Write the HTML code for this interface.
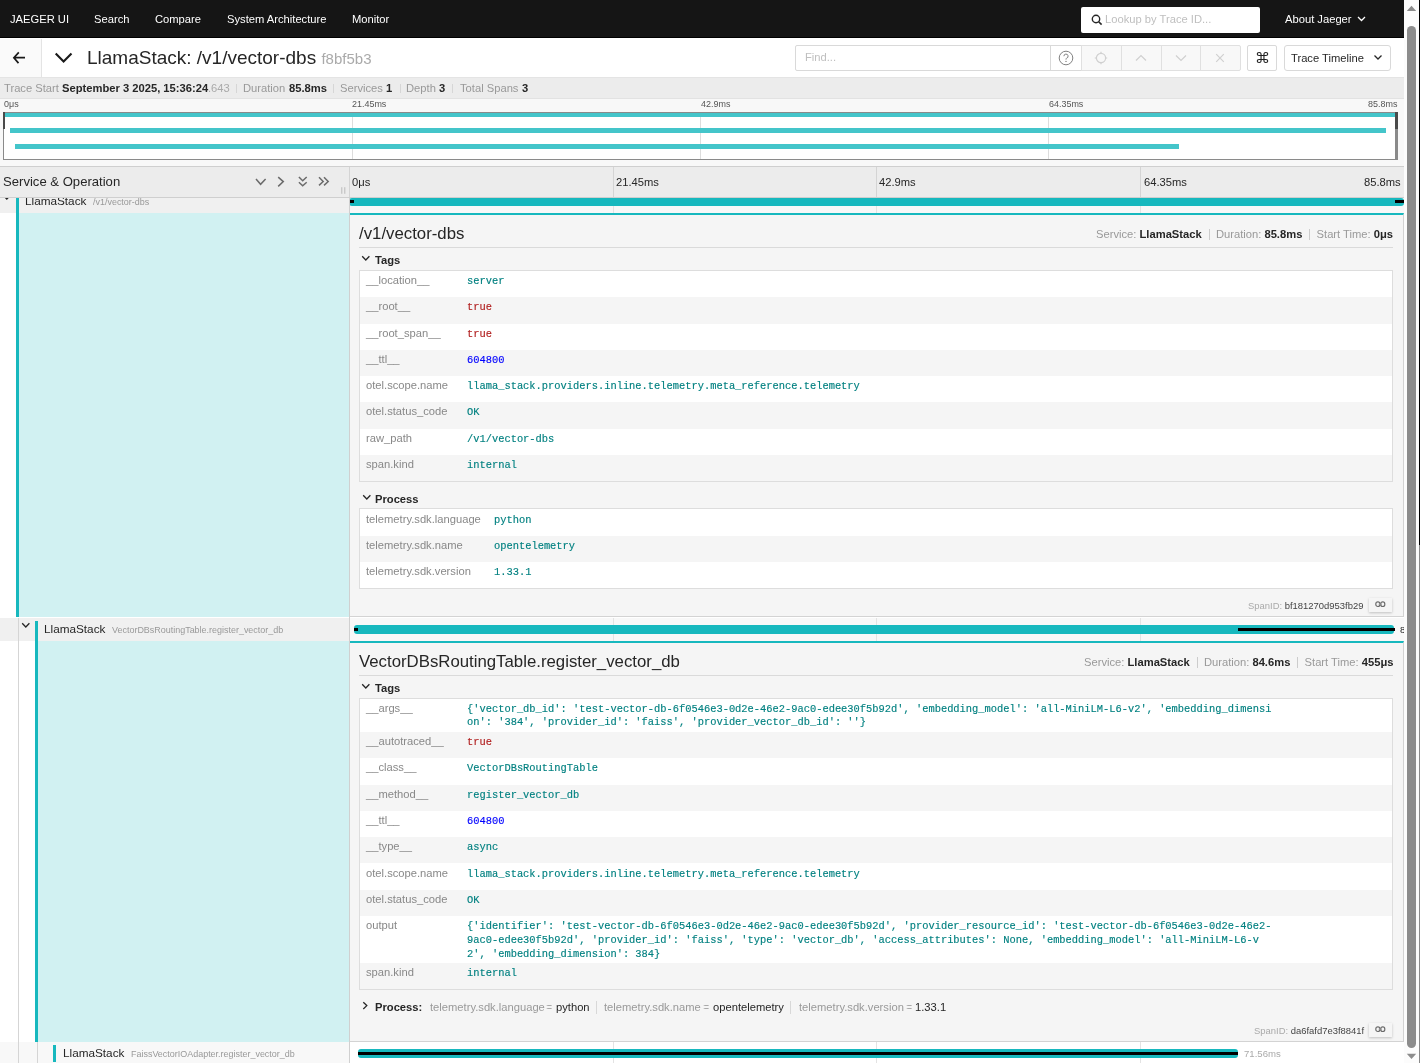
<!DOCTYPE html>
<html><head><meta charset="utf-8"><style>
*{box-sizing:border-box;margin:0;padding:0}
html,body{width:1420px;height:1063px;overflow:hidden;background:#fff;font-family:"Liberation Sans",sans-serif;color:#262626}
.a{position:absolute}
.t{position:absolute;white-space:pre;line-height:0;will-change:transform}
</style></head><body>
<div class="a" style="left:0px;top:0px;width:1404px;height:38px;background:#151515;border-bottom:1px solid #000"></div>
<div class="t" style="left:9.5px;top:19px;font-size:11.2px;color:#fff;">JAEGER UI</div>
<div class="t" style="left:94px;top:19px;font-size:11.2px;color:#fff;">Search</div>
<div class="t" style="left:155px;top:19px;font-size:11.2px;color:#fff;">Compare</div>
<div class="t" style="left:227px;top:19px;font-size:11.2px;color:#fff;">System Architecture</div>
<div class="t" style="left:352px;top:19px;font-size:11.2px;color:#fff;">Monitor</div>
<div class="a" style="left:1081px;top:7px;width:179px;height:26px;background:#fff;border-radius:2px"></div>
<svg class="a" style="left:1091px;top:14px" width="12" height="12" viewBox="0 0 12 12"><circle cx="5" cy="5" r="3.7" fill="none" stroke="#262626" stroke-width="1.4"/><path d="M7.7 7.7L10.6 10.6" stroke="#262626" stroke-width="1.6"/></svg>
<div class="t" style="left:1105px;top:19px;font-size:11.2px;color:#bfbfbf;">Lookup by Trace ID...</div>
<div class="t" style="left:1285px;top:19px;font-size:11.2px;color:#fff;">About Jaeger</div>
<svg class="a" style="left:1357px;top:16px" width="9" height="6" viewBox="0 0 9 6"><path d="M1 1L4.5 4.5L8 1" fill="none" stroke="#fff" stroke-width="1.3"/></svg>
<div class="a" style="left:0px;top:38px;width:1404px;height:40px;background:#fff;border-bottom:1px solid #e4e4e4"></div>
<div class="a" style="left:0px;top:39px;width:42px;height:38px;background:#fafafa;border-right:1px solid #e4e4e4"></div>
<svg class="a" style="left:10px;top:50px" width="18" height="16" viewBox="0 0 18 16"><path d="M3.8 7.7H15M8.8 2.4L3.9 7.7L8.5 13.1" fill="none" stroke="#1a1a1a" stroke-width="1.7"/></svg>
<svg class="a" style="left:53px;top:50px" width="21" height="14" viewBox="0 0 21 14"><path d="M2.7 3.5L10.6 11.5L18.5 3.5" fill="none" stroke="#1a1a1a" stroke-width="2.1"/></svg>
<div class="t" style="left:86.5px;top:58px;font-size:19px;color:#262626;">LlamaStack: /v1/vector-dbs <span style="font-size:15px;color:#aaa">f8bf5b3</span></div>
<div class="a" style="left:795px;top:45px;width:256px;height:26px;background:#fff;border:1px solid #d9d9d9;border-radius:2px 0 0 2px"></div>
<div class="t" style="left:804.5px;top:57px;font-size:11.2px;color:#bfbfbf;">Find...</div>
<div class="a" style="left:1050px;top:45px;width:32px;height:26px;background:#fff;border:1px solid #d9d9d9"></div>
<svg class="a" style="left:1058px;top:50px" width="16" height="16" viewBox="0 0 16 16"><circle cx="8" cy="8" r="6.8" fill="none" stroke="#7a7a7a" stroke-width="0.95"/><path d="M5.9 6.2A2.1 2.1 0 1 1 8.6 8.2C8.1 8.4 8 8.8 8 9.6" fill="none" stroke="#7a7a7a" stroke-width="0.95"/><circle cx="8" cy="11.4" r="0.7" fill="#7a7a7a"/></svg>
<div class="a" style="left:1081px;top:45px;width:160px;height:26px;background:#f8f8f8;border:1px solid #e0e0e0;border-radius:0 2px 2px 0"></div>
<div class="a" style="left:1121px;top:45px;width:1px;height:26px;background:#e0e0e0"></div>
<div class="a" style="left:1161px;top:45px;width:1px;height:26px;background:#e0e0e0"></div>
<div class="a" style="left:1200px;top:45px;width:1px;height:26px;background:#e0e0e0"></div>
<svg class="a" style="left:1093px;top:50px" width="16" height="16" viewBox="0 0 16 16"><circle cx="8" cy="8" r="4.6" fill="none" stroke="#d0d0d0" stroke-width="1.2"/><path d="M8 1.8V4M8 12V14.2M1.8 8H4M12 8H14.2" stroke="#d0d0d0" stroke-width="1.2"/></svg>
<svg class="a" style="left:1135px;top:54px" width="12" height="8" viewBox="0 0 12 8"><path d="M1 6.5L6 1.5L11 6.5" fill="none" stroke="#d0d0d0" stroke-width="1.2"/></svg>
<svg class="a" style="left:1175px;top:54px" width="12" height="8" viewBox="0 0 12 8"><path d="M1 1.5L6 6.5L11 1.5" fill="none" stroke="#d0d0d0" stroke-width="1.2"/></svg>
<svg class="a" style="left:1215px;top:53px" width="10" height="10" viewBox="0 0 10 10"><path d="M1.2 1.2L8.8 8.8M8.8 1.2L1.2 8.8" fill="none" stroke="#d0d0d0" stroke-width="1.2"/></svg>
<div class="a" style="left:1247px;top:45px;width:30px;height:26px;background:#fff;border:1px solid #d9d9d9;border-radius:2px"></div>
<svg class="a" style="left:1255.5px;top:50.9px" width="13" height="13" viewBox="0 0 13 13"><path d="M5.05 4.55H7.95V8.45H5.05ZM5.05 4.55L5.05 3.00A1.9 1.55 0 1 0 3.15 4.55ZM5.05 8.45L5.05 10.00A1.9 1.55 0 1 1 3.15 8.45ZM7.95 4.55L7.95 3.00A1.9 1.55 0 1 1 9.85 4.55ZM7.95 8.45L7.95 10.00A1.9 1.55 0 1 0 9.85 8.45Z" fill="none" stroke="#1f1f1f" stroke-width="1.1"/></svg>
<div class="a" style="left:1284px;top:45px;width:107px;height:26px;background:#fff;border:1px solid #d9d9d9;border-radius:3px"></div>
<div class="t" style="left:1291px;top:58px;font-size:11.2px;color:#262626;">Trace Timeline</div>
<svg class="a" style="left:1373px;top:54px" width="10" height="7" viewBox="0 0 10 7"><path d="M1.5 1.5L5 5L8.5 1.5" fill="none" stroke="#262626" stroke-width="1.3"/></svg>
<div class="a" style="left:0px;top:78px;width:1404px;height:21px;background:#ececec;border-bottom:1px solid #e2e2e2"></div>
<div class="t" style="left:4px;top:88px;font-size:11.2px;color:#999;">Trace Start</div>
<div class="t" style="left:61.5px;top:88px;font-size:11.2px;color:#262626;font-weight:bold">September 3 2025, 15:36:24</div>
<div class="t" style="left:207.5px;top:88px;font-size:11.2px;color:#aaa;">.643</div>
<div class="a" style="left:236px;top:84px;width:1px;height:9px;background:#d6d6d6"></div>
<div class="a" style="left:333px;top:84px;width:1px;height:9px;background:#d6d6d6"></div>
<div class="a" style="left:400px;top:84px;width:1px;height:9px;background:#d6d6d6"></div>
<div class="a" style="left:452px;top:84px;width:1px;height:9px;background:#d6d6d6"></div>
<div class="t" style="left:243px;top:88px;font-size:11.2px;color:#999;">Duration</div>
<div class="t" style="left:288.5px;top:88px;font-size:11.2px;color:#262626;font-weight:bold">85.8ms</div>
<div class="t" style="left:340px;top:88px;font-size:11.2px;color:#999;">Services</div>
<div class="t" style="left:386px;top:88px;font-size:11.2px;color:#262626;font-weight:bold">1</div>
<div class="t" style="left:406px;top:88px;font-size:11.2px;color:#999;">Depth</div>
<div class="t" style="left:438.5px;top:88px;font-size:11.2px;color:#262626;font-weight:bold">3</div>
<div class="t" style="left:459.8px;top:88px;font-size:11.2px;color:#999;">Total Spans</div>
<div class="t" style="left:521.8px;top:88px;font-size:11.2px;color:#262626;font-weight:bold">3</div>
<div class="a" style="left:0px;top:99px;width:1404px;height:68px;background:#f8f8f8;border-bottom:1px solid #dcdcdc"></div>
<div class="t" style="left:3.5px;top:104px;font-size:8.96px;color:#555;">0μs</div>
<div class="t" style="left:352px;top:104px;font-size:8.96px;color:#555;">21.45ms</div>
<div class="t" style="left:700.5px;top:104px;font-size:8.96px;color:#555;">42.9ms</div>
<div class="t" style="left:1048.5px;top:104px;font-size:8.96px;color:#555;">64.35ms</div>
<div class="t" style="right:22.5px;top:104px;font-size:8.96px;color:#555;">85.8ms</div>
<div class="a" style="left:3px;top:112px;width:1395px;height:48px;background:#fff;border:1px solid #8a8a8a"></div>
<div class="a" style="left:352px;top:113px;width:1px;height:46px;background:#ddd"></div>
<div class="a" style="left:700px;top:113px;width:1px;height:46px;background:#ddd"></div>
<div class="a" style="left:1048px;top:113px;width:1px;height:46px;background:#ddd"></div>
<div class="a" style="left:4px;top:113px;width:1391px;height:4px;background:#44c5ca"></div>
<div class="a" style="left:10px;top:128px;width:1376px;height:5px;background:#44c5ca"></div>
<div class="a" style="left:15px;top:144px;width:1164px;height:5px;background:#44c5ca"></div>
<div class="a" style="left:1395.3px;top:112px;width:2.6px;height:48px;background:#8a8a8a"></div>
<div class="a" style="left:3px;top:112px;width:1.9px;height:17px;background:#4a4a4a"></div>
<div class="a" style="left:1395.3px;top:112px;width:2.6px;height:17px;background:#4a4a4a"></div>
<div class="a" style="left:0px;top:190.6px;width:349px;height:22.4px;background:#f0f0f0"></div>
<div class="a" style="left:349px;top:190.6px;width:1055px;height:22.4px;background:#f8f8f8"></div>
<div class="a" style="left:613px;top:190.6px;width:1px;height:22.4px;background:#e3e3e3"></div>
<div class="a" style="left:876px;top:190.6px;width:1px;height:22.4px;background:#e3e3e3"></div>
<div class="a" style="left:1140px;top:190.6px;width:1px;height:22.4px;background:#e3e3e3"></div>
<svg class="a" style="left:2.2px;top:193.8px" width="10" height="8" viewBox="0 0 10 8"><path d="M1.2 1.3L4.8 5L8.4 1.3" fill="none" stroke="#262626" stroke-width="1.3"/></svg>
<div class="a" style="left:0px;top:212.8px;width:349px;height:1px;background:#cfe3e4"></div>
<div class="a" style="left:16px;top:193.6px;width:3px;height:20px;background:#17b8be"></div>
<div class="t" style="left:25.3px;top:200.7px;font-size:11.76px;color:#262626;">LlamaStack</div>
<div class="t" style="left:93px;top:201.7px;font-size:8.96px;color:#999;">/v1/vector-dbs</div>
<div class="a" style="left:349px;top:197.7px;width:1055px;height:8.3px;background:#17b8be;border-radius:3px"></div>
<div class="a" style="left:349.3px;top:200.2px;width:5px;height:3px;background:#000"></div>
<div class="a" style="left:1395px;top:200.2px;width:8.5px;height:3px;background:#000"></div>
<div class="a" style="left:0px;top:213px;width:16px;height:404px;background:#fff"></div>
<div class="a" style="left:16px;top:213px;width:3px;height:404px;background:#17b8be"></div>
<div class="a" style="left:19px;top:213px;width:330px;height:404px;background:#d1f1f2"></div>
<div class="a" style="left:349px;top:213px;width:1055px;height:404px;background:#f5f5f5;border-left:1px solid #d3d3d3;border-right:1px solid #d3d3d3;border-bottom:1px solid #d3d3d3;border-top:2px solid #17b8be"></div>
<div class="t" style="left:359.2px;top:233.9px;font-size:16.8px;color:#262626;">/v1/vector-dbs</div>
<div class="t" style="right:26.6px;top:234px;font-size:11.2px;color:#262626;"><span style="color:#999">Service:</span> <b style="color:#262626">LlamaStack</b><span style="display:inline-block;width:14.2px;height:0;position:relative"><i style="position:absolute;left:6.8px;top:-9px;width:1px;height:11px;background:#ccc"></i></span><span style="color:#999">Duration:</span> <b style="color:#262626">85.8ms</b><span style="display:inline-block;width:14.2px;height:0;position:relative"><i style="position:absolute;left:6.8px;top:-9px;width:1px;height:11px;background:#ccc"></i></span><span style="color:#999">Start Time:</span> <b style="color:#262626">0μs</b></div>
<div class="a" style="left:359px;top:247px;width:1034px;height:1px;background:#dadada"></div>
<svg class="a" style="left:361px;top:255px" width="10" height="8" viewBox="0 0 10 8"><path d="M1.2 1.3L4.8 5L8.4 1.3" fill="none" stroke="#262626" stroke-width="1.3"/></svg>
<div class="t" style="left:375px;top:260px;font-size:11.2px;color:#262626;font-weight:bold">Tags</div>
<div class="a" style="left:359px;top:270px;width:1034px;height:212px;background:#fff;border:1px solid #ddd"></div>
<div class="t" style="left:366.2px;top:280.1px;font-size:11.2px;color:#888;">__location__</div>
<div class="t" style="left:466.5px;top:281.1px;font-size:10.4px;color:#008080;font-family:'Liberation Mono',monospace;-webkit-text-stroke:0.15px currentColor;">server</div>
<div class="a" style="left:360px;top:297.25px;width:1032px;height:26.25px;background:#f5f5f5"></div>
<div class="t" style="left:366.2px;top:306.35px;font-size:11.2px;color:#888;">__root__</div>
<div class="t" style="left:466.5px;top:307.35px;font-size:10.4px;color:#b22222;font-family:'Liberation Mono',monospace;-webkit-text-stroke:0.15px currentColor;">true</div>
<div class="t" style="left:366.2px;top:332.6px;font-size:11.2px;color:#888;">__root_span__</div>
<div class="t" style="left:466.5px;top:333.6px;font-size:10.4px;color:#b22222;font-family:'Liberation Mono',monospace;-webkit-text-stroke:0.15px currentColor;">true</div>
<div class="a" style="left:360px;top:349.75px;width:1032px;height:26.25px;background:#f5f5f5"></div>
<div class="t" style="left:366.2px;top:358.85px;font-size:11.2px;color:#888;">__ttl__</div>
<div class="t" style="left:466.5px;top:359.85px;font-size:10.4px;color:#0000ff;font-family:'Liberation Mono',monospace;-webkit-text-stroke:0.15px currentColor;">604800</div>
<div class="t" style="left:366.2px;top:385.1px;font-size:11.2px;color:#888;">otel.scope.name</div>
<div class="t" style="left:466.5px;top:386.1px;font-size:10.4px;color:#008080;font-family:'Liberation Mono',monospace;-webkit-text-stroke:0.15px currentColor;">llama_stack.providers.inline.telemetry.meta_reference.telemetry</div>
<div class="a" style="left:360px;top:402.25px;width:1032px;height:26.25px;background:#f5f5f5"></div>
<div class="t" style="left:366.2px;top:411.35px;font-size:11.2px;color:#888;">otel.status_code</div>
<div class="t" style="left:466.5px;top:412.35px;font-size:10.4px;color:#008080;font-family:'Liberation Mono',monospace;-webkit-text-stroke:0.15px currentColor;">OK</div>
<div class="t" style="left:366.2px;top:437.6px;font-size:11.2px;color:#888;">raw_path</div>
<div class="t" style="left:466.5px;top:438.6px;font-size:10.4px;color:#008080;font-family:'Liberation Mono',monospace;-webkit-text-stroke:0.15px currentColor;">/v1/vector-dbs</div>
<div class="a" style="left:360px;top:454.75px;width:1032px;height:26.25px;background:#f5f5f5"></div>
<div class="t" style="left:366.2px;top:463.85px;font-size:11.2px;color:#888;">span.kind</div>
<div class="t" style="left:466.5px;top:464.85px;font-size:10.4px;color:#008080;font-family:'Liberation Mono',monospace;-webkit-text-stroke:0.15px currentColor;">internal</div>
<svg class="a" style="left:362px;top:493.5px" width="10" height="8" viewBox="0 0 10 8"><path d="M1.2 1.3L4.8 5L8.4 1.3" fill="none" stroke="#262626" stroke-width="1.3"/></svg>
<div class="t" style="left:375px;top:498.5px;font-size:11.2px;color:#262626;font-weight:bold">Process</div>
<div class="a" style="left:359px;top:508.4px;width:1034px;height:80.7px;background:#fff;border:1px solid #ddd"></div>
<div class="t" style="left:366.2px;top:518.5px;font-size:11.2px;color:#888;">telemetry.sdk.language</div>
<div class="t" style="left:493.5px;top:519.5px;font-size:10.4px;color:#008080;font-family:'Liberation Mono',monospace;-webkit-text-stroke:0.15px currentColor;">python</div>
<div class="a" style="left:360px;top:536.3px;width:1032px;height:25.8px;background:#f5f5f5"></div>
<div class="t" style="left:366.2px;top:545.4px;font-size:11.2px;color:#888;">telemetry.sdk.name</div>
<div class="t" style="left:493.5px;top:546.4px;font-size:10.4px;color:#008080;font-family:'Liberation Mono',monospace;-webkit-text-stroke:0.15px currentColor;">opentelemetry</div>
<div class="t" style="left:366.2px;top:571.2px;font-size:11.2px;color:#888;">telemetry.sdk.version</div>
<div class="t" style="left:493.5px;top:572.2px;font-size:10.4px;color:#008080;font-family:'Liberation Mono',monospace;-webkit-text-stroke:0.15px currentColor;">1.33.1</div>
<div class="t" style="right:56.5px;top:605.8px;font-size:9.45px;color:#262626;"><span style="color:#aaa">SpanID:</span> <span style="color:#444">bf181270d953fb29</span></div>
<div class="a" style="left:1368.7px;top:597.9px;width:23.5px;height:14px;background:#f5f5f5;box-shadow:0 1px 2.5px rgba(0,0,0,0.22)"></div>
<svg class="a" style="left:1375px;top:601.2px" width="11" height="7" viewBox="0 0 11 7"><rect x="0.8" y="0.9" width="4.1" height="4.6" rx="2" fill="none" stroke="#6a6a6a" stroke-width="1.15"/><rect x="5.7" y="0.9" width="4.1" height="4.6" rx="2" fill="none" stroke="#6a6a6a" stroke-width="1.15"/><path d="M3.6 3.2H7" stroke="#9a9a9a" stroke-width="0.9"/></svg>
<div class="a" style="left:0px;top:618px;width:349px;height:22.6px;background:#f0f0f0"></div>
<div class="a" style="left:349px;top:618px;width:1055px;height:22.6px;background:#f8f8f8"></div>
<div class="a" style="left:613px;top:618px;width:1px;height:23px;background:#e3e3e3"></div>
<div class="a" style="left:876px;top:618px;width:1px;height:23px;background:#e3e3e3"></div>
<div class="a" style="left:1140px;top:618px;width:1px;height:23px;background:#e3e3e3"></div>
<div class="a" style="left:18px;top:618px;width:1px;height:23px;background:#d5d5d5"></div>
<div class="a" style="left:0px;top:640.6px;width:349px;height:1px;background:#cfe3e4"></div>
<svg class="a" style="left:20.9px;top:622px" width="10" height="8" viewBox="0 0 10 8"><path d="M1.2 1.3L4.8 5L8.4 1.3" fill="none" stroke="#262626" stroke-width="1.3"/></svg>
<div class="a" style="left:35px;top:621px;width:3px;height:20px;background:#17b8be"></div>
<div class="t" style="left:44.3px;top:628.8px;font-size:11.76px;color:#262626;">LlamaStack</div>
<div class="t" style="left:112px;top:629.8px;font-size:8.96px;color:#999;">VectorDBsRoutingTable.register_vector_db</div>
<div class="a" style="left:354px;top:625.2px;width:1040.4px;height:8.5px;background:#17b8be;border-radius:3px"></div>
<div class="a" style="left:354px;top:628.1px;width:4px;height:2.8px;background:#000"></div>
<div class="a" style="left:1238px;top:628.1px;width:157px;height:2.8px;background:#000"></div>
<div class="a" style="left:1397px;top:618px;width:6.5px;height:22px;overflow:hidden"><div class="t" style="left:2.5px;top:12px;font-size:9.6px;color:#262626">84.6ms</div></div>
<div class="a" style="left:0px;top:641px;width:18px;height:401px;background:#fff"></div>
<div class="a" style="left:18px;top:641px;width:1px;height:401px;background:#d5d5d5"></div>
<div class="a" style="left:19px;top:641px;width:16px;height:401px;background:#fff"></div>
<div class="a" style="left:35px;top:641px;width:3px;height:401px;background:#17b8be"></div>
<div class="a" style="left:38px;top:641px;width:311px;height:401px;background:#d1f1f2"></div>
<div class="a" style="left:349px;top:641px;width:1055px;height:400.5px;background:#f5f5f5;border-left:1px solid #d3d3d3;border-right:1px solid #d3d3d3;border-bottom:1px solid #d3d3d3;border-top:2px solid #17b8be"></div>
<div class="t" style="left:359.2px;top:661.5px;font-size:16.8px;color:#262626;">VectorDBsRoutingTable.register_vector_db</div>
<div class="t" style="right:26.6px;top:662px;font-size:11.2px;color:#262626;"><span style="color:#999">Service:</span> <b style="color:#262626">LlamaStack</b><span style="display:inline-block;width:14.2px;height:0;position:relative"><i style="position:absolute;left:6.8px;top:-9px;width:1px;height:11px;background:#ccc"></i></span><span style="color:#999">Duration:</span> <b style="color:#262626">84.6ms</b><span style="display:inline-block;width:14.2px;height:0;position:relative"><i style="position:absolute;left:6.8px;top:-9px;width:1px;height:11px;background:#ccc"></i></span><span style="color:#999">Start Time:</span> <b style="color:#262626">455μs</b></div>
<div class="a" style="left:359px;top:675px;width:1034px;height:1px;background:#dadada"></div>
<svg class="a" style="left:361px;top:683px" width="10" height="8" viewBox="0 0 10 8"><path d="M1.2 1.3L4.8 5L8.4 1.3" fill="none" stroke="#262626" stroke-width="1.3"/></svg>
<div class="t" style="left:375px;top:688px;font-size:11.2px;color:#262626;font-weight:bold">Tags</div>
<div class="a" style="left:359px;top:698px;width:1034px;height:292.4px;background:#fff;border:1px solid #ddd"></div>
<div class="t" style="left:366.2px;top:708.1px;font-size:11.2px;color:#888;">__args__</div>
<div class="t" style="left:466.5px;top:708.6px;font-size:10.4px;color:#008080;font-family:'Liberation Mono',monospace;-webkit-text-stroke:0.15px currentColor;">{'vector_db_id': 'test-vector-db-6f0546e3-0d2e-46e2-9ac0-edee30f5b92d', 'embedding_model': 'all-MiniLM-L6-v2', 'embedding_dimensi</div>
<div class="t" style="left:466.5px;top:721.7px;font-size:10.4px;color:#008080;font-family:'Liberation Mono',monospace;-webkit-text-stroke:0.15px currentColor;">on': '384', 'provider_id': 'faiss', 'provider_vector_db_id': ''}</div>
<div class="a" style="left:360px;top:732px;width:1032px;height:26.3px;background:#f5f5f5"></div>
<div class="t" style="left:366.2px;top:741.1px;font-size:11.2px;color:#888;">__autotraced__</div>
<div class="t" style="left:466.5px;top:742.1px;font-size:10.4px;color:#b22222;font-family:'Liberation Mono',monospace;-webkit-text-stroke:0.15px currentColor;">true</div>
<div class="t" style="left:366.2px;top:767.4px;font-size:11.2px;color:#888;">__class__</div>
<div class="t" style="left:466.5px;top:768.4px;font-size:10.4px;color:#008080;font-family:'Liberation Mono',monospace;-webkit-text-stroke:0.15px currentColor;">VectorDBsRoutingTable</div>
<div class="a" style="left:360px;top:784.6px;width:1032px;height:26.3px;background:#f5f5f5"></div>
<div class="t" style="left:366.2px;top:793.7px;font-size:11.2px;color:#888;">__method__</div>
<div class="t" style="left:466.5px;top:794.7px;font-size:10.4px;color:#008080;font-family:'Liberation Mono',monospace;-webkit-text-stroke:0.15px currentColor;">register_vector_db</div>
<div class="t" style="left:366.2px;top:820px;font-size:11.2px;color:#888;">__ttl__</div>
<div class="t" style="left:466.5px;top:821px;font-size:10.4px;color:#0000ff;font-family:'Liberation Mono',monospace;-webkit-text-stroke:0.15px currentColor;">604800</div>
<div class="a" style="left:360px;top:837.2px;width:1032px;height:26.3px;background:#f5f5f5"></div>
<div class="t" style="left:366.2px;top:846.3px;font-size:11.2px;color:#888;">__type__</div>
<div class="t" style="left:466.5px;top:847.3px;font-size:10.4px;color:#008080;font-family:'Liberation Mono',monospace;-webkit-text-stroke:0.15px currentColor;">async</div>
<div class="t" style="left:366.2px;top:872.6px;font-size:11.2px;color:#888;">otel.scope.name</div>
<div class="t" style="left:466.5px;top:873.6px;font-size:10.4px;color:#008080;font-family:'Liberation Mono',monospace;-webkit-text-stroke:0.15px currentColor;">llama_stack.providers.inline.telemetry.meta_reference.telemetry</div>
<div class="a" style="left:360px;top:889.8px;width:1032px;height:26.3px;background:#f5f5f5"></div>
<div class="t" style="left:366.2px;top:898.9px;font-size:11.2px;color:#888;">otel.status_code</div>
<div class="t" style="left:466.5px;top:899.9px;font-size:10.4px;color:#008080;font-family:'Liberation Mono',monospace;-webkit-text-stroke:0.15px currentColor;">OK</div>
<div class="t" style="left:366.2px;top:925.2px;font-size:11.2px;color:#888;">output</div>
<div class="t" style="left:466.5px;top:925.8px;font-size:10.4px;color:#008080;font-family:'Liberation Mono',monospace;-webkit-text-stroke:0.15px currentColor;">{'identifier': 'test-vector-db-6f0546e3-0d2e-46e2-9ac0-edee30f5b92d', 'provider_resource_id': 'test-vector-db-6f0546e3-0d2e-46e2-</div>
<div class="t" style="left:466.5px;top:939.6px;font-size:10.4px;color:#008080;font-family:'Liberation Mono',monospace;-webkit-text-stroke:0.15px currentColor;">9ac0-edee30f5b92d', 'provider_id': 'faiss', 'type': 'vector_db', 'access_attributes': None, 'embedding_model': 'all-MiniLM-L6-v</div>
<div class="t" style="left:466.5px;top:953.6px;font-size:10.4px;color:#008080;font-family:'Liberation Mono',monospace;-webkit-text-stroke:0.15px currentColor;">2', 'embedding_dimension': 384}</div>
<div class="a" style="left:360px;top:963.1px;width:1032px;height:26.3px;background:#f5f5f5"></div>
<div class="t" style="left:366.2px;top:972.2px;font-size:11.2px;color:#888;">span.kind</div>
<div class="t" style="left:466.5px;top:973.2px;font-size:10.4px;color:#008080;font-family:'Liberation Mono',monospace;-webkit-text-stroke:0.15px currentColor;">internal</div>
<svg class="a" style="left:362px;top:1001px" width="8" height="10" viewBox="0 0 8 10"><path d="M1.3 1.2L4.8 4.6L1.3 8" fill="none" stroke="#262626" stroke-width="1.3"/></svg>
<div class="t" style="left:375px;top:1007px;font-size:11.2px;color:#262626;font-weight:bold">Process:</div>
<div class="t" style="left:430px;top:1007px;font-size:11.2px;color:#999;">telemetry.sdk.language</div>
<div class="t" style="left:546px;top:1007px;font-size:11.2px;color:#aaa;transform:scaleX(0.85)">=</div>
<div class="t" style="left:555.5px;top:1007px;font-size:11.2px;color:#262626;">python</div>
<div class="t" style="left:604.3px;top:1007px;font-size:11.2px;color:#999;">telemetry.sdk.name</div>
<div class="t" style="left:703px;top:1007px;font-size:11.2px;color:#aaa;transform:scaleX(0.85)">=</div>
<div class="t" style="left:712.5px;top:1007px;font-size:11.2px;color:#262626;">opentelemetry</div>
<div class="t" style="left:798.5px;top:1007px;font-size:11.2px;color:#999;">telemetry.sdk.version</div>
<div class="t" style="left:905.5px;top:1007px;font-size:11.2px;color:#aaa;transform:scaleX(0.85)">=</div>
<div class="t" style="left:914.5px;top:1007px;font-size:11.2px;color:#262626;">1.33.1</div>
<div class="a" style="left:596px;top:1001px;width:1px;height:13px;background:#d8d8d8"></div>
<div class="a" style="left:790px;top:1001px;width:1px;height:13px;background:#d8d8d8"></div>
<div class="t" style="right:56.2px;top:1031.2px;font-size:9.45px;color:#262626;"><span style="color:#aaa">SpanID:</span> <span style="color:#444">da6fafd7e3f8841f</span></div>
<div class="a" style="left:1368.7px;top:1022.7px;width:23.5px;height:14px;background:#f5f5f5;box-shadow:0 1px 2.5px rgba(0,0,0,0.22)"></div>
<svg class="a" style="left:1375px;top:1026px" width="11" height="7" viewBox="0 0 11 7"><rect x="0.8" y="0.9" width="4.1" height="4.6" rx="2" fill="none" stroke="#6a6a6a" stroke-width="1.15"/><rect x="5.7" y="0.9" width="4.1" height="4.6" rx="2" fill="none" stroke="#6a6a6a" stroke-width="1.15"/><path d="M3.6 3.2H7" stroke="#9a9a9a" stroke-width="0.9"/></svg>
<div class="a" style="left:0px;top:1042px;width:349px;height:23px;background:#f8f8f8"></div>
<div class="a" style="left:349px;top:1042px;width:1055px;height:23px;background:#fff"></div>
<div class="a" style="left:613px;top:1042px;width:1px;height:23px;background:#e3e3e3"></div>
<div class="a" style="left:876px;top:1042px;width:1px;height:23px;background:#e3e3e3"></div>
<div class="a" style="left:1140px;top:1042px;width:1px;height:23px;background:#e3e3e3"></div>
<div class="a" style="left:18px;top:1042px;width:1px;height:23px;background:#d5d5d5"></div>
<div class="a" style="left:37px;top:1042px;width:1px;height:23px;background:#d5d5d5"></div>
<div class="a" style="left:53px;top:1045px;width:3px;height:17px;background:#17b8be"></div>
<div class="t" style="left:63.3px;top:1052.6px;font-size:11.76px;color:#262626;">LlamaStack</div>
<div class="t" style="left:131px;top:1053.6px;font-size:8.96px;color:#999;">FaissVectorIOAdapter.register_vector_db</div>
<div class="a" style="left:357.5px;top:1049.2px;width:880.2px;height:8.7px;background:#17b8be;border-radius:3px"></div>
<div class="a" style="left:357.5px;top:1052px;width:880.2px;height:3px;background:#000"></div>
<div class="t" style="left:1243.5px;top:1054px;font-size:9.6px;color:#aaa;">71.56ms</div>
<div class="a" style="left:348.5px;top:198px;width:1px;height:865px;background:#d0d0d0"></div>
<div class="a" style="left:0px;top:166px;width:1404px;height:32px;background:#ececec;border-top:1px solid #cfcfcf;border-bottom:1px solid #cfcfcf"></div>
<div class="t" style="left:3px;top:182px;font-size:13.1px;color:#262626;">Service &amp; Operation</div>
<svg class="a" style="left:250px;top:172px" width="100" height="25" viewBox="0 0 100 25"><path d="M6 7L10.6 12.3L15.6 7" fill="none" stroke="#6b6b6b" stroke-width="1.5"/><path d="M28.2 5.1L33.3 9.6L28.2 14.4" fill="none" stroke="#6b6b6b" stroke-width="1.5"/><path d="M48.9 5L52.7 8.8L56.7 5M48.9 10.2L52.7 13.8L56.7 10.2" fill="none" stroke="#6b6b6b" stroke-width="1.5"/><path d="M69 5.3L73.2 9.5L69 13.4M74 5.3L78.2 9.5L74 13.4" fill="none" stroke="#6b6b6b" stroke-width="1.5"/><path d="M91.8 15.2V21.8M94.8 15.2V21.8" fill="none" stroke="#bbb" stroke-width="1"/></svg>
<div class="a" style="left:348.5px;top:167px;width:1px;height:30px;background:#d4d4d4"></div>
<div class="a" style="left:613px;top:167px;width:1px;height:30px;background:#d4d4d4"></div>
<div class="a" style="left:876px;top:167px;width:1px;height:30px;background:#d4d4d4"></div>
<div class="a" style="left:1140px;top:167px;width:1px;height:30px;background:#d4d4d4"></div>
<div class="t" style="left:352px;top:182px;font-size:11.2px;color:#262626;">0μs</div>
<div class="t" style="left:615.5px;top:182px;font-size:11.2px;color:#262626;">21.45ms</div>
<div class="t" style="left:878.5px;top:182px;font-size:11.2px;color:#262626;">42.9ms</div>
<div class="t" style="left:1143.5px;top:182px;font-size:11.2px;color:#262626;">64.35ms</div>
<div class="t" style="right:19px;top:182px;font-size:11.2px;color:#262626;">85.8ms</div>
<div class="a" style="left:1404px;top:0px;width:15px;height:1063px;background:#fcfcfc"></div>
<div class="a" style="left:1407px;top:26px;width:9px;height:1022px;background:#8c8c8c;border-radius:4.5px"></div>
<svg class="a" style="left:1404px;top:0" width="15" height="14" viewBox="0 0 15 14"><path d="M2.8 11H12.2L7.5 5.8Z" fill="#8c8c8c"/></svg>
<svg class="a" style="left:1404px;top:1049px" width="15" height="14" viewBox="0 0 15 14"><path d="M2.8 4.8H12.2L7.5 10Z" fill="#8c8c8c"/></svg>
<div class="a" style="left:1419px;top:0px;width:1px;height:545px;background:#000"></div>
<div class="a" style="left:1419px;top:545px;width:1px;height:518px;background:#8a8a8a"></div>
</body></html>
